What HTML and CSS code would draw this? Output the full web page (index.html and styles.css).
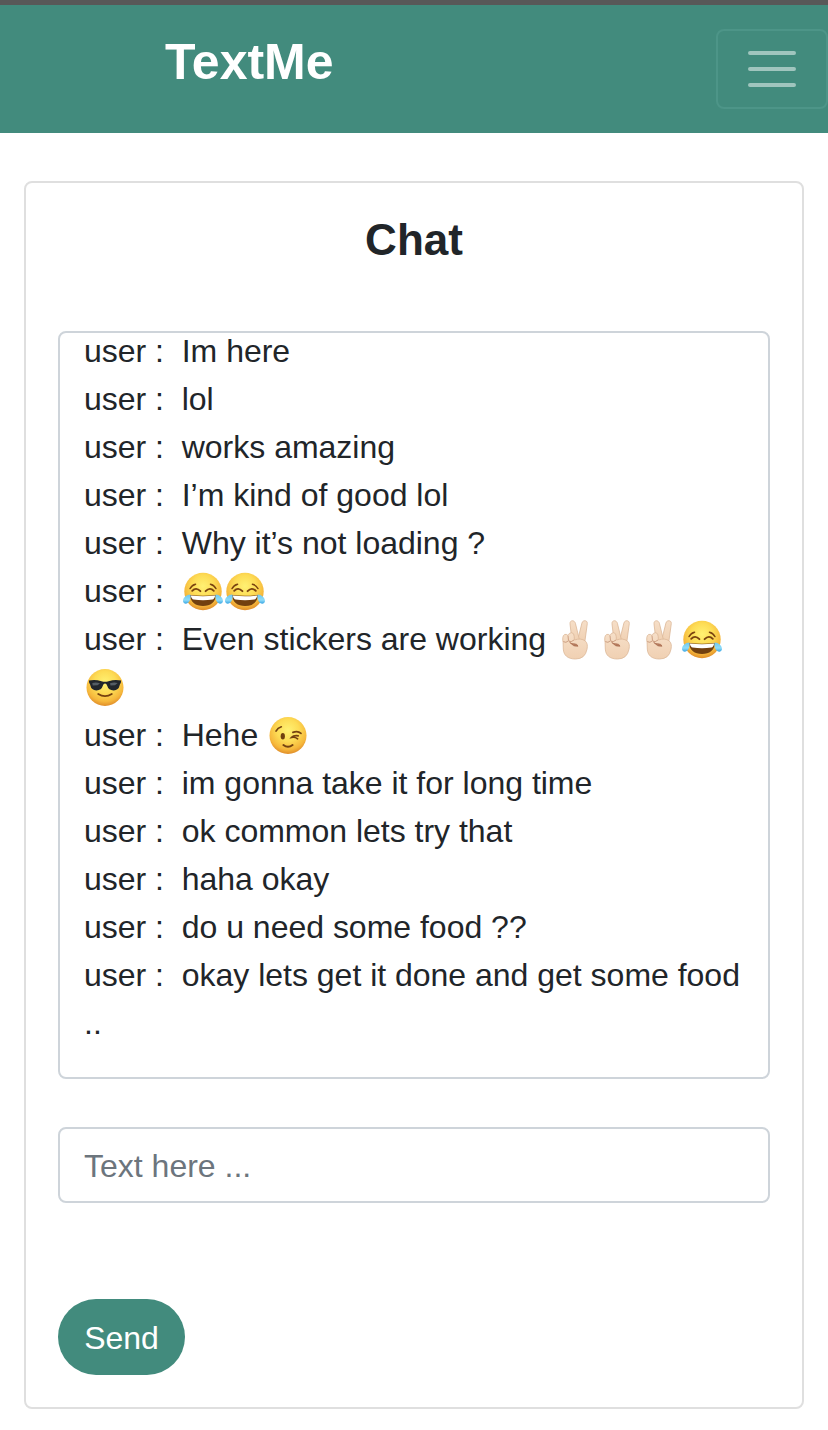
FILE: index.html
```html
<!DOCTYPE html>
<html lang="en">
<head>
<meta charset="utf-8">
<title>TextMe</title>
<link rel="stylesheet" href="styles.css">
</head>
<body>
<svg class="defs" aria-hidden="true">
  <defs>
    <radialGradient id="face" cx="50%" cy="36%" r="66%">
      <stop offset="0" stop-color="#fff173"/>
      <stop offset=".45" stop-color="#fddc55"/>
      <stop offset=".78" stop-color="#f6b83c"/>
      <stop offset="1" stop-color="#dc8626"/>
    </radialGradient>
    <linearGradient id="tear" x1="0" y1="0" x2="0" y2="1">
      <stop offset="0" stop-color="#6fc8ee"/>
      <stop offset=".6" stop-color="#8fdcf8"/>
      <stop offset="1" stop-color="#3ba6e4"/>
    </linearGradient>
    <linearGradient id="skin" x1="0" y1="0" x2="0" y2="1">
      <stop offset="0" stop-color="#f6dfc8"/>
      <stop offset="1" stop-color="#f0d0b2"/>
    </linearGradient>
    <symbol id="joy" viewBox="0 0 42 42">
      <circle cx="21" cy="20.5" r="18.7" fill="url(#face)"/>
      <g fill="none" stroke="#7a4310" stroke-linecap="round">
        <path d="M8 17.6Q10 14 13.6 13.2M34 17.6Q32 14 28.4 13.2" stroke-width="1.4"/>
        <path d="M10.2 19.8Q14 15.8 18.4 20.2M31.8 19.8Q28 15.8 23.6 20.2" stroke-width="1.9"/>
      </g>
      <path d="M7.8 24Q21 25.6 34.2 24Q32.6 35 21 35T7.8 24Z" fill="#72400f"/>
      <path d="M8.8 24.5Q21 26 33.2 24.5Q32.4 28.2 30.4 28.6Q21 30 11.6 28.6Q9.6 28.2 8.8 24.5Z" fill="#fff"/>
      <path d="M8.4 23.6C4.6 23.6 1 26.6 1 30.3C1.5 33.5 5.8 33.4 7.4 30.2C8.7 27.9 8.9 25.4 8.4 23.6ZM33.6 23.6C37.4 23.6 41 26.6 41 30.3C40.5 33.5 36.2 33.4 34.6 30.2C33.3 27.9 33.1 25.4 33.6 23.6Z" fill="url(#tear)"/>
    </symbol>
    <symbol id="cool" viewBox="0 0 42 42">
      <circle cx="21" cy="20.5" r="18.5" fill="url(#face)"/>
      <path d="M4.9 13.6Q11 12.2 17.5 14.2Q21 15.2 24.5 14.2Q31 12.2 37.1 13.6L36.8 16Q35.9 16.6 35.6 18.6Q34.6 23.5 29.5 23.4Q24.5 23.3 23.2 18.7Q22.5 16.6 21 16.6T18.8 18.7Q17.5 23.3 12.5 23.4Q7.4 23.5 6.4 18.6Q6.1 16.6 5.2 16Z" fill="#22262b"/>
      <path d="M8.3 16Q12 14.8 16 16.2L13.6 18.2L8.7 18.5ZM26 16.2Q30 14.8 33.7 16L31 18.2L26.5 18.5Z" fill="#555d64"/>
      <path d="M14.2 27Q21 31.4 27.8 27" fill="none" stroke="#76420f" stroke-width="1.8" stroke-linecap="round"/>
    </symbol>
    <symbol id="wink" viewBox="0 0 42 42">
      <circle cx="21" cy="20.5" r="18.5" fill="url(#face)"/>
      <ellipse cx="15.8" cy="21.3" rx="2.1" ry="3.3" fill="#70400f"/>
      <g fill="none" stroke="#754311" stroke-linecap="round">
        <path d="M9 16.1Q10.7 12.8 14.3 11.8M25.9 17.4Q30.7 15.3 34 18.4" stroke-width="1.7"/>
        <path d="M31.2 20.8Q26.5 20.2 24.6 22.4Q28.2 21.8 30.6 23.8" stroke-width="1.7"/>
        <path d="M16.4 30Q21 33.6 25.6 30" stroke-width="2"/>
      </g>
    </symbol>
    <symbol id="peace" viewBox="0 0 42 42">
      <g fill="url(#skin)" stroke="#dcb898" stroke-width=".8" stroke-linejoin="round">
        <path d="M22.6 21.5L26.9 4.1C27.7 .6 32.8 1 32.3 4.6L29.8 23Z"/>
        <path d="M17 22L15 4.8C14.7 1 19.4 .6 20.4 4.3L24.6 21.5Z"/>
        <path d="M8.1 23.6C7.5 20.5 7.3 16.2 9.8 15.4Q12 15 13 16.6Q14 13.6 16.6 13.7Q19.2 14 19.2 17.5L19.4 21Q26 18.8 30 21.8Q33.3 24.4 32 30.2Q30.2 40 20.5 40C12.6 40 8.6 36.2 8.3 30Z"/>
      </g>
      <path d="M13 16.8L13.5 21.6M8.2 22.6Q11 24.4 13.5 21.8Q16 24 19 21" fill="none" stroke="#cda083" stroke-width="1"/>
      <path d="M14.6 23.2Q15.3 24.9 18.6 24.7Q22.6 24.7 23 27.2Q18.5 28.2 14.6 23.2Z" fill="#b98163" stroke="#a8694c" stroke-width=".7" stroke-linejoin="round"/>
    </symbol>
  </defs>
</svg>
<header class="navbar">
  <h1 class="brand">TextMe</h1>
  <button class="toggler" aria-label="Menu">
    <svg width="60" height="60" viewBox="0 0 30 30" fill="none" stroke="#a0c5be" stroke-width="2" stroke-linecap="round"><path d="M4 7h22M4 15h22M4 23h22"/></svg>
  </button>
</header>
<main class="card">
  <h2 class="title">Chat</h2>
  <div class="messages">
    <p>user : &nbsp;Im here</p>
    <p>user : &nbsp;lol</p>
    <p>user : &nbsp;works amazing</p>
    <p>user : &nbsp;I’m kind of good lol</p>
    <p>user : &nbsp;Why it’s not loading ?</p>
    <p>user : &nbsp;<svg class="emoji"><use href="#joy"/></svg><svg class="emoji"><use href="#joy"/></svg></p>
    <p>user : &nbsp;Even stickers are working <svg class="emoji"><use href="#peace"/></svg><svg class="emoji"><use href="#peace"/></svg><svg class="emoji"><use href="#peace"/></svg><svg class="emoji"><use href="#joy"/></svg><br><svg class="emoji"><use href="#cool"/></svg></p>
    <p>user : &nbsp;Hehe <svg class="emoji"><use href="#wink"/></svg></p>
    <p>user : &nbsp;im gonna take it for long time</p>
    <p>user : &nbsp;ok common lets try that</p>
    <p>user : &nbsp;haha okay</p>
    <p>user : &nbsp;do u need some food ??</p>
    <p>user : &nbsp;okay lets get it done and get some food<br>..</p>
  </div>
  <input class="field" type="text" placeholder="Text here ...">
  <button class="send">Send</button>
</main>
</body>
</html>
```
FILE: styles.css
```css
* { box-sizing: border-box; }
body {
  margin: 0;
  background: #fff;
  color: #212529;
  font: 32px/48px "Liberation Sans", Arial, sans-serif;
}
.defs { display: block; width: 0; height: 0; }
.navbar {
  display: flex;
  justify-content: space-between;
  align-items: flex-start;
  height: 133px;
  border-top: 5px solid #585858;
  padding: 24px 0 0 165px;
  background: #428b7d;
}
.brand {
  margin: 3px 0 0;
  color: #fff;
  font-size: 50px;
  line-height: 60px;
}
.toggler {
  display: flex;
  align-items: center;
  justify-content: center;
  width: 112px;
  height: 80px;
  padding: 0;
  border: 2px solid #4d9588;
  border-radius: 8px;
  background: none;
}
.card {
  display: flex;
  flex-direction: column;
  align-items: stretch;
  height: 1228px;
  margin: 48px 24px 0;
  padding: 31px 32px 32px;
  border: 2px solid #dfdfdf;
  border-radius: 8px;
}
.title {
  margin: 0 0 65px;
  font-size: 44px;
  line-height: 52px;
  text-align: center;
}
.messages {
  height: 748px;
  padding: 0 24px;
  border: 2px solid #ced4da;
  border-radius: 8px;
  overflow: hidden;
}
.messages p { margin: 0; letter-spacing: -0.01px; white-space: nowrap; }
.messages p:first-child { margin-top: -6px; }
.emoji {
  width: 42px;
  height: 42px;
  margin: -3px 0;
  vertical-align: -8px;
}
.field {
  height: 76px;
  margin: 48px 0 96px;
  padding: 2px 24px 0;
  border: 2px solid #ced4da;
  border-radius: 8px;
  background: #fff;
  font: inherit;
}
.field::placeholder { color: #6c757d; opacity: 1; }
.send {
  align-self: flex-start;
  width: 127px;
  height: 76px;
  padding: 2px 0 0;
  border: 0;
  border-radius: 38px;
  background: #428b7d;
  color: #fff;
  font: inherit;
}
```
